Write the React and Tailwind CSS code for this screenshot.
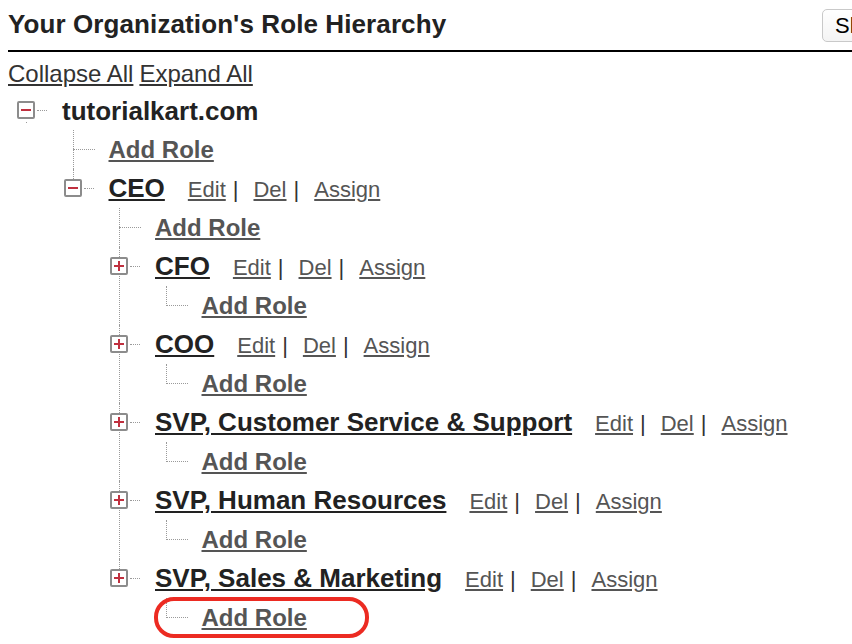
import React from 'react'

// Role tree as shown on the page
const TREE = {
  name: 'tutorialkart.com',
  root: true,
  open: true,
  children: [
    { leaf: true },
    {
      name: 'CEO',
      open: true,
      actions: true,
      children: [
        { leaf: true },
        { name: 'CFO', actions: true, children: [{ leaf: true }] },
        { name: 'COO', actions: true, children: [{ leaf: true }] },
        { name: 'SVP, Customer Service & Support', actions: true, children: [{ leaf: true }] },
        { name: 'SVP, Human Resources', actions: true, children: [{ leaf: true }] },
        { name: 'SVP, Sales & Marketing', actions: true, children: [{ leaf: true, highlight: true }] },
      ],
    },
  ],
}

function ToggleIcon({ open }) {
  return (
    <div className="absolute left-[1px] top-[10px] w-[18px] h-[18px] border-2 border-[#8c8c8c] rounded-[2px] bg-white flex items-center justify-center">
      <div className="relative w-[10px] h-[10px] flex items-center justify-center">
        <div className="w-[10px] h-[2px] bg-[#c0303f]" />
        {!open && <div className="absolute w-[2px] h-[10px] bg-[#c0303f]" />}
      </div>
    </div>
  )
}

function Actions() {
  return (
    <div className="flex items-baseline ml-[23px] text-[22px] text-[#555]">
      <a className="underline cursor-pointer">Edit</a>
      <span className="ml-[7px] mr-[15px] text-[#333]">|</span>
      <a className="underline cursor-pointer">Del</a>
      <span className="ml-[7px] mr-[15px] text-[#333]">|</span>
      <a className="underline cursor-pointer">Assign</a>
    </div>
  )
}

function TreeNode({ node, last }) {
  return (
    <div className="relative">
      {!node.root && !last && (
        <div className="absolute left-[10px] top-0 bottom-0 border-l border-dotted border-[#9a9a9a]" />
      )}
      {!node.root && last && (
        <div className="absolute left-[10px] top-0 h-[20px] border-l border-dotted border-[#9a9a9a]" />
      )}
      <div className="relative flex items-center h-[39px]">
        <div className="relative w-[46px] h-full shrink-0">
          {node.leaf ? (
            <div className="absolute left-[10px] top-[19px] w-[22px] border-t border-dotted border-[#9a9a9a]" />
          ) : (
            <>
              <div className="absolute left-[21px] top-[19px] w-[10px] border-t border-dotted border-[#9a9a9a]" />
              <ToggleIcon open={node.open} />
              {node.root && <div className="absolute left-[10px] top-[31px] w-px h-px bg-[#9a9a9a]" />}
            </>
          )}
        </div>
        {node.leaf ? (
          <a className="text-[24px] leading-[30px] font-bold text-[#555] underline cursor-pointer">Add Role</a>
        ) : node.root ? (
          <span className="text-[26px] leading-[30px] font-bold text-[#222]">{node.name}</span>
        ) : (
          <div className="flex items-baseline leading-[30px]">
            <a className="text-[26px] font-bold text-[#222] underline cursor-pointer">{node.name}</a>
            {node.actions && <Actions />}
          </div>
        )}
        {node.highlight && (
          <div className="absolute left-[-2px] top-[-1px] w-[215px] h-[41px] border-[4px] border-[#ec2b22] rounded-[20px] pointer-events-none" />
        )}
      </div>
      {node.children && (
        <div className="pl-[46.5px]">
          {node.children.map((c, i) => (
            <TreeNode key={i} node={c} last={i === node.children.length - 1} />
          ))}
        </div>
      )}
    </div>
  )
}

export default function App() {
  return (
    <div className="w-[852px] h-[644px] overflow-hidden bg-white pl-[8px] font-['Liberation_Sans',Arial,sans-serif]">
      {/* header */}
      <div className="flex items-start w-[1000px] pt-[9px] h-[52px] border-b-2 border-black">
        <h2 className="w-[814px] shrink-0 text-[26px] leading-[30px] font-bold text-[#222] tracking-[0.1px]">
          Your Organization's Role Hierarchy
        </h2>
        <button className="shrink-0 h-[33px] px-[12px] rounded-[5px] border border-[#c9c9c9] bg-gradient-to-b from-white to-[#f4f4f4] text-[22px] leading-none text-black">
          Show in list view
        </button>
      </div>

      <div className="mt-[8px] flex text-[24px] leading-[28px] text-[#333]">
        <a className="underline cursor-pointer">Collapse All</a>
        <a className="ml-[6px] underline cursor-pointer">Expand All</a>
      </div>

      {/* tree */}
      <div className="mt-[3px] pl-[8px]">
        <TreeNode node={TREE} last />
      </div>
    </div>
  )
}
